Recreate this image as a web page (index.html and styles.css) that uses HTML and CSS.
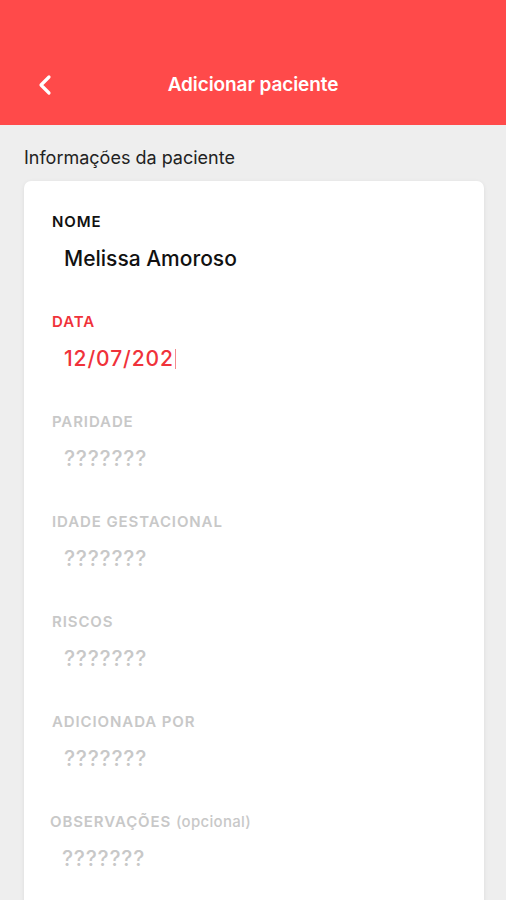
FILE: index.html
```html
<!DOCTYPE html>
<html lang="pt-BR">
<head>
    <meta charset="UTF-8">
    <title>Adicionar paciente</title>
    <link rel="stylesheet" href="styles.css">
</head>
<body>
    <header class="topbar">
        <button class="back" aria-label="Voltar">
            <svg width="16" height="22" viewBox="0 0 16 22">
                <path d="M12 3 L4 11 L12 19" fill="none" stroke="#fff" stroke-width="3.2" stroke-linecap="round" stroke-linejoin="round"/>
            </svg>
        </button>
        <h1>Adicionar paciente</h1>
    </header>

    <main class="content">
        <h2 class="section-title">Informações da paciente</h2>
        <div class="card">
            <div class="field filled">
                <label>NOME</label>
                <div class="value">Melissa Amoroso</div>
            </div>
            <div class="field active">
                <label>DATA</label>
                <div class="value">12/07/202<span class="caret"></span></div>
            </div>
            <div class="field">
                <label>PARIDADE</label>
                <div class="value">???????</div>
            </div>
            <div class="field">
                <label>IDADE GESTACIONAL</label>
                <div class="value">???????</div>
            </div>
            <div class="field">
                <label>RISCOS</label>
                <div class="value">???????</div>
            </div>
            <div class="field">
                <label>ADICIONADA POR</label>
                <div class="value">???????</div>
            </div>
            <div class="field optional">
                <label>OBSERVAÇÕES <span class="hint">(opcional)</span></label>
                <div class="value">???????</div>
            </div>
        </div>
    </main>
</body>
</html>
```

FILE: styles.css
```css
body {
    margin: 0;
    background-color: #eeeeee;
    font-family: Inter, "Liberation Sans", Arial, sans-serif;
    height: 900px;
    overflow: hidden;
}

.topbar {
    background-color: #ff4a4a;
    height: 125px;
    box-sizing: border-box;
    padding: 64px 0 19px;
    display: flex;
    align-items: center;
}

.topbar .back {
    background: none;
    border: none;
    padding: 0;
    margin-left: 37px;
    width: 16px;
    height: 42px;
    display: flex;
    align-items: center;
}

.topbar h1 {
    flex: 1;
    margin: 0 0 0 -53px;
    text-align: center;
    color: #fff;
    font-size: 19px;
    line-height: 22px;
    font-weight: 600;
    letter-spacing: -0.1px;
}

.content {
    padding: 0 22px 0 24px;
}

.section-title {
    margin: 22px 0 12px;
    font-size: 18px;
    line-height: 22px;
    font-weight: normal;
    color: #222;
}

.card {
    background-color: #fff;
    border-radius: 7px;
    box-shadow: 0 1px 4px rgba(0, 0, 0, 0.08);
    padding: 32px 28px 40px;
}

.field {
    height: 100px;
}

.field label {
    display: block;
    font-size: 15px;
    line-height: 18px;
    font-weight: 600;
    letter-spacing: 0.9px;
    color: #c8c8c8;
}

.field .value {
    margin: 16px 0 0 12px;
    font-size: 21px;
    line-height: 24px;
    font-weight: 500;
    letter-spacing: 0.8px;
    color: #c8c8c8;
}

.field.filled label,
.field.filled .value {
    color: #111;
}

.field.filled .value {
    letter-spacing: 0;
}

.field.active label,
.field.active .value {
    color: #f0323a;
}

.field.active .value {
    letter-spacing: 0.9px;
}

.caret {
    display: inline-block;
    width: 1px;
    height: 20px;
    background-color: #f58a8e;
    vertical-align: -3px;
    margin-left: 1px;
}

.field.optional {
    margin-left: -2px;
}

.hint {
    font-weight: 500;
    letter-spacing: 0.3px;
}
```
